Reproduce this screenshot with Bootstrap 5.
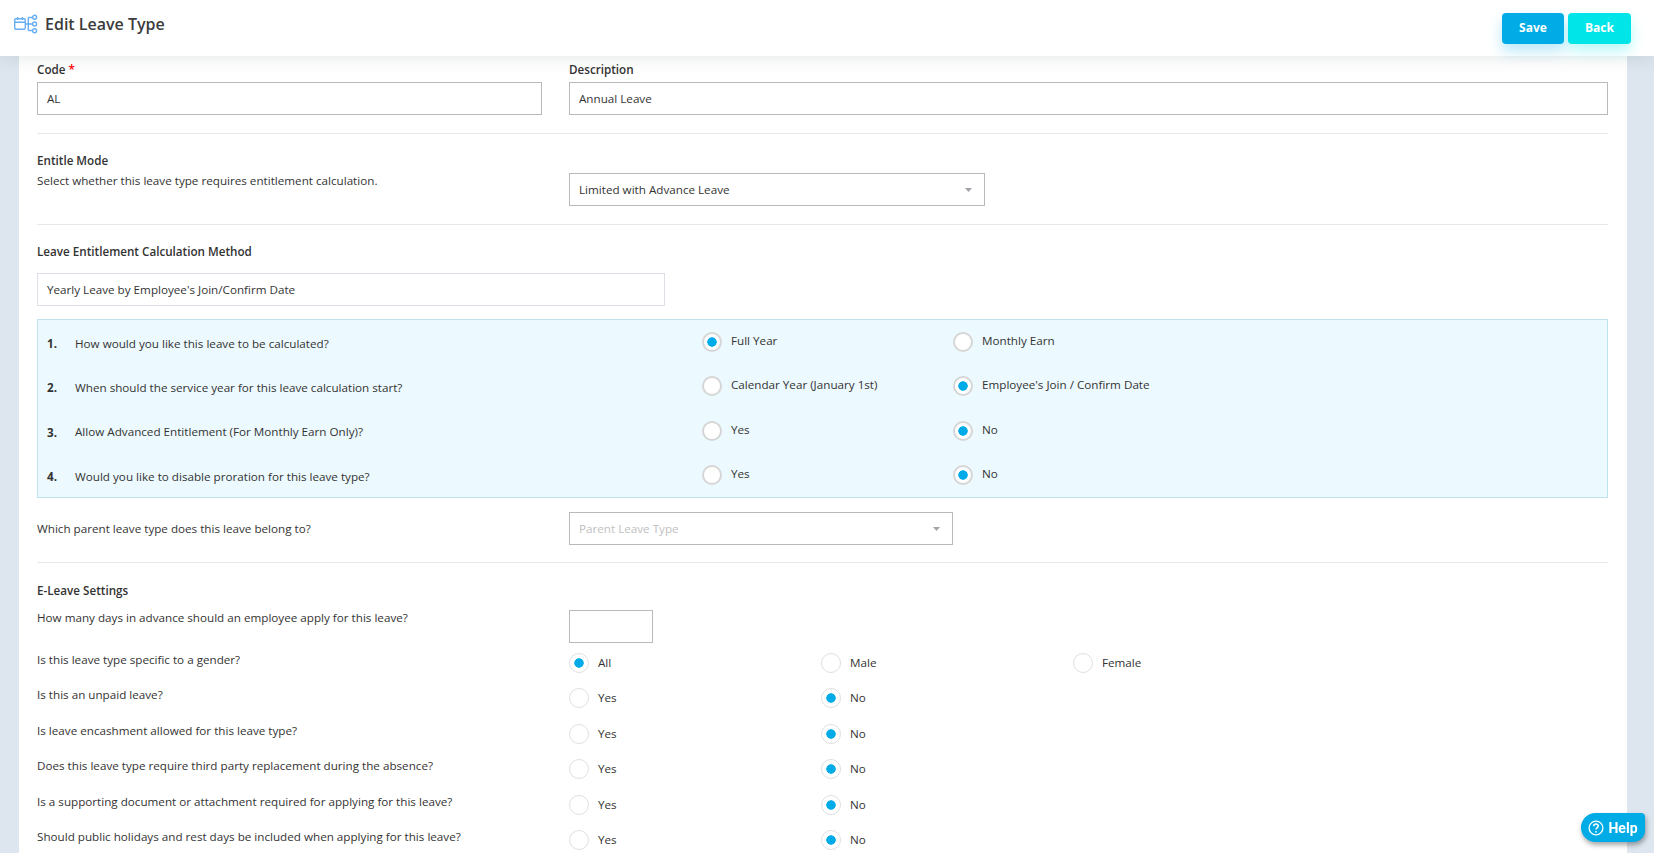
<!DOCTYPE html>
<html lang="en">
<head>
<meta charset="utf-8">
<title>Edit Leave Type</title>
<link href="https://cdn.jsdelivr.net/npm/bootstrap@5.3.0/dist/css/bootstrap.min.css" rel="stylesheet">
<style>
html,body{height:100%;overflow:hidden}
body{background:#dde5ee;font-family:"Open Sans","Liberation Sans",sans-serif;font-size:11.67px;color:#333;line-height:16px}
.pg-head{height:56px;background:#fff;box-shadow:0 0 18px rgba(60,80,90,.16);position:relative;z-index:5;padding:0 23px 0 14px}
.pg-brand{padding-bottom:8px}
.pg-title{font-size:16px;font-weight:600;color:#3c3c3c;margin:0 0 0 6px;line-height:22px}
.act{height:31px;border:0;border-radius:4px;color:#fff;font-size:12px;font-weight:700;padding:0;box-shadow:0 7px 14px rgba(0,172,230,.28)}
.act-save{width:62px;background:#00abe6}
.act-back{width:63px;background:#00e5e8;box-shadow:0 7px 14px rgba(0,229,232,.28)}
.pg-sheet{background:#fff;margin:0 27px 0 19px;padding:6px 19px 0 18px;height:calc(100% - 56px);overflow:hidden}
.lbl{font-weight:600;display:block;margin:0;height:16px}
.req{color:#f00}
.col-a{width:505px;flex:none}
.col-b{margin-left:27px;flex:1 1 auto}
.fld.form-control,.fld.form-select{height:33px;border-radius:0;border:1px solid #b9b9b9;font-size:11.67px;color:#333;padding:0 9px;line-height:31px;box-shadow:none}
.fld.form-select{background-image:url("data:image/svg+xml,%3Csvg xmlns='http://www.w3.org/2000/svg' width='7' height='4'%3E%3Cpath d='M0 0h7L3.5 4z' fill='%23a3a3ab'/%3E%3C/svg%3E");background-size:7px 4px;background-position:right 12px center}
.fld-mode{width:416px}
.fld-parent{width:384px;color:#c0c0c0!important}
.fld-calc{width:628px;margin-top:13px;border-color:#dedee6!important;background:#fff!important}
.fld-days{width:84px}
.sep{border:0;border-top:1px solid #e8e8e8;opacity:1;margin:18px 0 19px}
.sep-last{margin:17px 0 20px}
.quiz{background:#ecf9fe;border:1px solid #bde4ec;height:179px;margin-top:13px;padding:0 0 0 9px}
.quiz-row{height:44.3px}
.qn{width:28px;flex:none;font-weight:700;padding-top:4px}
.qt{width:627px;flex:none;padding-top:3px}
.opt{width:251px;flex:none;display:flex;align-items:flex-start;gap:9px}
.opt .form-check-input{margin:0;flex:none;width:20px;height:20px;border:2px solid #d6d6d6;background-color:#fff;background-image:none;box-shadow:none}
.opt .form-check-input:checked{background-image:radial-gradient(circle at 50% 50%,#00abe8 4.4px,transparent 5px);background-color:#fff;border-color:#d6d6d6}
.opt span{line-height:18px}
.parent-row{margin-top:14px}
.set-first{margin-top:11px}
.set-first .set-q{padding-top:0}
.set-row{height:35.4px}
.set-gender{margin-top:7px}
.set-q{width:532px;flex:none}
.set-row .set-q{padding-top:2px}
.set-row .opt .form-check-input{border-width:1px;border-color:#dfdfdf;margin-top:3px}
.set-row .opt span{margin-top:4px}
.set-row .opt{width:252px}
.help-fab{position:fixed;right:9px;bottom:11px;width:64px;height:29px;background:#00abe6;color:#fff;font-family:Roboto,"Liberation Sans",sans-serif;font-size:14px;font-weight:700;border-radius:15px 4px 12px 15px;box-shadow:1px 3px 5px rgba(0,0,0,.35);z-index:9;gap:4px}
</style>
</head>
<body>
<header class="pg-head d-flex align-items-center justify-content-between">
  <div class="pg-brand d-flex align-items-center">
    <svg width="25" height="20" viewBox="0 0 25 20" fill="none" stroke="#68aef2" stroke-width="1.4" aria-hidden="true">
      <rect x=".7" y="4.7" width="10.6" height="10.6" rx="1.4"/>
      <path d="M.7 8.2h10.6M3.6 3v3M8.4 3v3M11.3 10h3M14.3 3.5v13M14.3 3.5h4M14.3 10h4M14.3 16.5h4"/>
      <circle cx="20.6" cy="3.3" r="2"/><circle cx="20.6" cy="10" r="2"/><circle cx="20.6" cy="16.7" r="2"/>
    </svg>
    <h1 class="pg-title">Edit Leave Type</h1>
  </div>
  <div class="d-flex gap-1">
    <button type="button" class="btn act act-save">Save</button>
    <button type="button" class="btn act act-back">Back</button>
  </div>
</header>

<main class="pg-sheet">
  <form>
    <div class="d-flex">
      <div class="col-a">
        <label class="lbl mb-1 pb-0">Code <span class="req">*</span></label>
        <input class="form-control fld" value="AL">
      </div>
      <div class="col-b">
        <label class="lbl mb-1">Description</label>
        <input class="form-control fld" value="Annual Leave">
      </div>
    </div>
    <hr class="sep">
    <div class="d-flex">
      <div class="col-a">
        <div class="lbl">Entitle Mode</div>
        <div class="mt-1">Select whether this leave type requires entitlement calculation.</div>
      </div>
      <div class="col-b pt-3">
        <select class="form-select fld fld-mode mt-1"><option>Limited with Advance Leave</option></select>
      </div>
    </div>
    <hr class="sep">
    <div class="lbl">Leave Entitlement Calculation Method</div>
    <input class="form-control fld fld-calc pt-0" value="Yearly Leave by Employee's Join/Confirm Date" readonly>

    <div class="quiz">
      <div class="quiz-row d-flex align-items-center">
        <div class="qn">1.</div><div class="qt">How would you like this leave to be calculated?</div>
        <label class="opt"><input class="form-check-input" type="radio" name="q1" checked><span>Full Year</span></label>
        <label class="opt"><input class="form-check-input" type="radio" name="q1"><span>Monthly Earn</span></label>
      </div>
      <div class="quiz-row d-flex align-items-center">
        <div class="qn">2.</div><div class="qt">When should the service year for this leave calculation start?</div>
        <label class="opt"><input class="form-check-input" type="radio" name="q2"><span>Calendar Year (January 1st)</span></label>
        <label class="opt"><input class="form-check-input" type="radio" name="q2" checked><span>Employee's Join / Confirm Date</span></label>
      </div>
      <div class="quiz-row d-flex align-items-center">
        <div class="qn">3.</div><div class="qt">Allow Advanced Entitlement (For Monthly Earn Only)?</div>
        <label class="opt"><input class="form-check-input" type="radio" name="q3"><span>Yes</span></label>
        <label class="opt"><input class="form-check-input" type="radio" name="q3" checked><span>No</span></label>
      </div>
      <div class="quiz-row d-flex align-items-center">
        <div class="qn">4.</div><div class="qt">Would you like to disable proration for this leave type?</div>
        <label class="opt"><input class="form-check-input" type="radio" name="q4"><span>Yes</span></label>
        <label class="opt"><input class="form-check-input" type="radio" name="q4" checked><span>No</span></label>
      </div>
    </div>

    <div class="parent-row d-flex align-items-center">
      <div class="col-a">Which parent leave type does this leave belong to?</div>
      <div class="col-b"><select class="form-select fld fld-parent"><option>Parent Leave Type</option></select></div>
    </div>
    <hr class="sep sep-last">
    <div class="lbl">E-Leave Settings</div>
    <div class="set-first d-flex">
      <div class="set-q">How many days in advance should an employee apply for this leave?</div>
      <input class="form-control fld fld-days" value="">
    </div>
    <div class="set-row set-gender d-flex">
      <div class="set-q">Is this leave type specific to a gender?</div>
      <label class="opt"><input class="form-check-input" type="radio" name="g" checked><span>All</span></label>
      <label class="opt"><input class="form-check-input" type="radio" name="g"><span>Male</span></label>
      <label class="opt"><input class="form-check-input" type="radio" name="g"><span>Female</span></label>
    </div>
    <div class="set-row d-flex">
      <div class="set-q">Is this an unpaid leave?</div>
      <label class="opt"><input class="form-check-input" type="radio" name="s1"><span>Yes</span></label>
      <label class="opt"><input class="form-check-input" type="radio" name="s1" checked><span>No</span></label>
    </div>
    <div class="set-row d-flex">
      <div class="set-q">Is leave encashment allowed for this leave type?</div>
      <label class="opt"><input class="form-check-input" type="radio" name="s2"><span>Yes</span></label>
      <label class="opt"><input class="form-check-input" type="radio" name="s2" checked><span>No</span></label>
    </div>
    <div class="set-row d-flex">
      <div class="set-q">Does this leave type require third party replacement during the absence?</div>
      <label class="opt"><input class="form-check-input" type="radio" name="s3"><span>Yes</span></label>
      <label class="opt"><input class="form-check-input" type="radio" name="s3" checked><span>No</span></label>
    </div>
    <div class="set-row d-flex">
      <div class="set-q">Is a supporting document or attachment required for applying for this leave?</div>
      <label class="opt"><input class="form-check-input" type="radio" name="s4"><span>Yes</span></label>
      <label class="opt"><input class="form-check-input" type="radio" name="s4" checked><span>No</span></label>
    </div>
    <div class="set-row d-flex">
      <div class="set-q">Should public holidays and rest days be included when applying for this leave?</div>
      <label class="opt"><input class="form-check-input" type="radio" name="s5"><span>Yes</span></label>
      <label class="opt"><input class="form-check-input" type="radio" name="s5" checked><span>No</span></label>
    </div>
  </form>
</main>

<div class="help-fab d-flex align-items-center justify-content-center">
  <svg width="16" height="16" viewBox="0 0 16 16" fill="none" stroke="#fff" stroke-width="1.3" aria-hidden="true">
    <circle cx="8" cy="8" r="6.9"/>
    <path d="M5.8 6.2c0-1.3 1-2.1 2.2-2.1s2.2.8 2.2 2c0 1.7-2.2 1.7-2.2 3.4" stroke-width="1.5"/>
    <circle cx="8" cy="11.8" r=".9" fill="#fff" stroke="none"/>
  </svg>
  <span>Help</span>
</div>
</body>
</html>
